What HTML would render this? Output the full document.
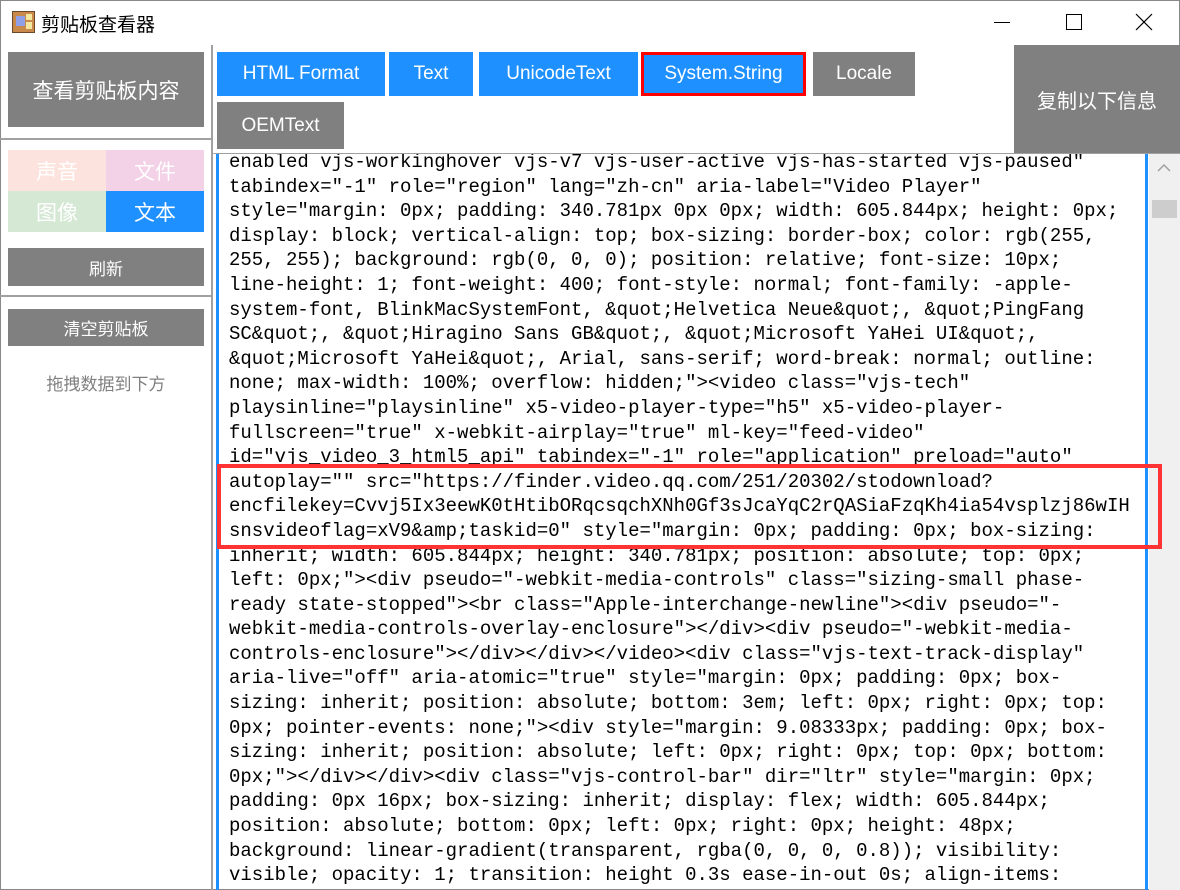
<!DOCTYPE html>
<html><head><meta charset="utf-8"><style>
*{margin:0;padding:0;box-sizing:border-box}
body{width:1180px;height:890px;overflow:hidden;background:#fff;font-family:"Liberation Sans","Noto Sans CJK SC",sans-serif;position:relative}
.a{position:absolute}
.btn{position:absolute;color:#fff;display:flex;align-items:center;justify-content:center;font-size:19px}
.g{background:#808080}.b{background:#1e90ff}
pre{font-family:"Liberation Mono",monospace;font-size:19px;line-height:24.6px;color:#000}
</style></head><body>
<div class="a" style="left:0;top:0;width:1180px;height:890px;border:1px solid #888;border-top:none"></div>
<div class="a" style="left:0;top:0;width:1180px;height:1px;background:#888"></div>
<!-- title -->
<div class="a" style="left:12px;top:11px;width:23px;height:22px;background:#c8894a;border:1px solid #6b4a2a"></div>
<div class="a" style="left:16px;top:16px;width:9px;height:10px;background:#8fa0e8"></div>
<div class="a" style="left:26px;top:14px;width:6px;height:6px;background:#f4e7a0"></div>
<div class="a" style="left:26px;top:22px;width:6px;height:7px;background:#f4e7a0"></div>
<div class="a" style="left:41px;top:10px;font-size:19px;color:#000">剪贴板查看器</div>
<div class="a" style="left:994px;top:22px;width:16px;height:1px;background:#000"></div>
<div class="a" style="left:1066px;top:14px;width:16px;height:16px;border:1px solid #000"></div>
<svg class="a" style="left:1135px;top:13px" width="18" height="18"><path d="M1 1L17 17M17 1L1 17" stroke="#000" stroke-width="1.2"/></svg>
<!-- left panel -->
<div class="btn g" style="left:8px;top:52px;width:196px;height:75px;font-size:21px">查看剪贴板内容</div>
<div class="a" style="left:0;top:138px;width:212px;height:2px;background:#a0a0a0"></div>
<div class="btn" style="left:8px;top:150px;width:98px;height:41px;background:#fde3dd;font-size:21px">声音</div>
<div class="btn" style="left:106px;top:150px;width:98px;height:41px;background:#f3d1e6;font-size:21px">文件</div>
<div class="btn" style="left:8px;top:191px;width:98px;height:41px;background:#d5e8d4;font-size:21px">图像</div>
<div class="btn b" style="left:106px;top:191px;width:98px;height:41px;font-size:21px">文本</div>
<div class="btn g" style="left:8px;top:248px;width:196px;height:38px;font-size:17px">刷新</div>
<div class="a" style="left:0;top:295px;width:212px;height:2px;background:#a0a0a0"></div>
<div class="btn g" style="left:8px;top:309px;width:196px;height:37px;font-size:17px">清空剪贴板</div>
<div class="a" style="left:0;top:370px;width:212px;text-align:center;font-size:17px;color:#808080">拖拽数据到下方</div>
<div class="a" style="left:211px;top:45px;width:2px;height:845px;background:#a0a0a0"></div>
<!-- tabs -->
<div class="btn b" style="left:217px;top:52px;width:168px;height:44px">HTML Format</div>
<div class="btn b" style="left:389px;top:52px;width:84px;height:44px">Text</div>
<div class="btn b" style="left:479px;top:52px;width:159px;height:44px">UnicodeText</div>
<div class="btn b" style="left:641px;top:52px;width:165px;height:44px;border:3px solid #f00">System.String</div>
<div class="btn g" style="left:813px;top:52px;width:102px;height:44px">Locale</div>
<div class="btn g" style="left:217px;top:102px;width:127px;height:47px">OEMText</div>
<div class="btn g" style="left:1014px;top:45px;width:166px;height:108px;font-size:20px">复制以下信息</div>
<div class="a" style="left:213px;top:153px;width:967px;height:1px;background:#a0a0a0"></div>
<!-- text area -->
<div class="a" style="left:216px;top:154px;width:3px;height:736px;background:#1e90ff"></div>
<div class="a" style="left:1145px;top:154px;width:3px;height:736px;background:#1e90ff"></div>
<div class="a" style="left:1149px;top:154px;width:31px;height:736px;background:#f0f0f0"></div>
<svg class="a" style="left:1157px;top:163px" width="14" height="10"><path d="M1 8L7 2L13 8" stroke="#a0a0a0" stroke-width="1.5" fill="none"/></svg>
<div class="a" style="left:1152px;top:200px;width:25px;height:18px;background:#cdcdcd"></div>
<div class="a" style="left:219px;top:154px;width:926px;height:736px;overflow:hidden">
<pre style="position:absolute;left:10px;top:-4px">enabled vjs-workinghover vjs-v7 vjs-user-active vjs-has-started vjs-paused"
tabindex="-1" role="region" lang="zh-cn" aria-label="Video Player"
style="margin: 0px; padding: 340.781px 0px 0px; width: 605.844px; height: 0px;
display: block; vertical-align: top; box-sizing: border-box; color: rgb(255,
255, 255); background: rgb(0, 0, 0); position: relative; font-size: 10px;
line-height: 1; font-weight: 400; font-style: normal; font-family: -apple-
system-font, BlinkMacSystemFont, &amp;quot;Helvetica Neue&amp;quot;, &amp;quot;PingFang
SC&amp;quot;, &amp;quot;Hiragino Sans GB&amp;quot;, &amp;quot;Microsoft YaHei UI&amp;quot;,
&amp;quot;Microsoft YaHei&amp;quot;, Arial, sans-serif; word-break: normal; outline:
none; max-width: 100%; overflow: hidden;"&gt;&lt;video class="vjs-tech"
playsinline="playsinline" x5-video-player-type="h5" x5-video-player-
fullscreen="true" x-webkit-airplay="true" ml-key="feed-video"
id="vjs_video_3_html5_api" tabindex="-1" role="application" preload="auto"
autoplay="" src="https://finder.video.qq.com/251/20302/stodownload?
encfilekey=Cvvj5Ix3eewK0tHtibORqcsqchXNh0Gf3sJcaYqC2rQASiaFzqKh4ia54vsplzj86wIH
snsvideoflag=xV9&amp;amp;taskid=0" style="margin: 0px; padding: 0px; box-sizing:
inherit; width: 605.844px; height: 340.781px; position: absolute; top: 0px;
left: 0px;"&gt;&lt;div pseudo="-webkit-media-controls" class="sizing-small phase-
ready state-stopped"&gt;&lt;br class="Apple-interchange-newline"&gt;&lt;div pseudo="-
webkit-media-controls-overlay-enclosure"&gt;&lt;/div&gt;&lt;div pseudo="-webkit-media-
controls-enclosure"&gt;&lt;/div&gt;&lt;/div&gt;&lt;/video&gt;&lt;div class="vjs-text-track-display"
aria-live="off" aria-atomic="true" style="margin: 0px; padding: 0px; box-
sizing: inherit; position: absolute; bottom: 3em; left: 0px; right: 0px; top:
0px; pointer-events: none;"&gt;&lt;div style="margin: 9.08333px; padding: 0px; box-
sizing: inherit; position: absolute; left: 0px; right: 0px; top: 0px; bottom:
0px;"&gt;&lt;/div&gt;&lt;/div&gt;&lt;div class="vjs-control-bar" dir="ltr" style="margin: 0px;
padding: 0px 16px; box-sizing: inherit; display: flex; width: 605.844px;
position: absolute; bottom: 0px; left: 0px; right: 0px; height: 48px;
background: linear-gradient(transparent, rgba(0, 0, 0, 0.8)); visibility:
visible; opacity: 1; transition: height 0.3s ease-in-out 0s; align-items:</pre>
</div>
<div class="a" style="left:217px;top:464px;width:945px;height:85px;border:4px solid #f33"></div>
</body></html>
